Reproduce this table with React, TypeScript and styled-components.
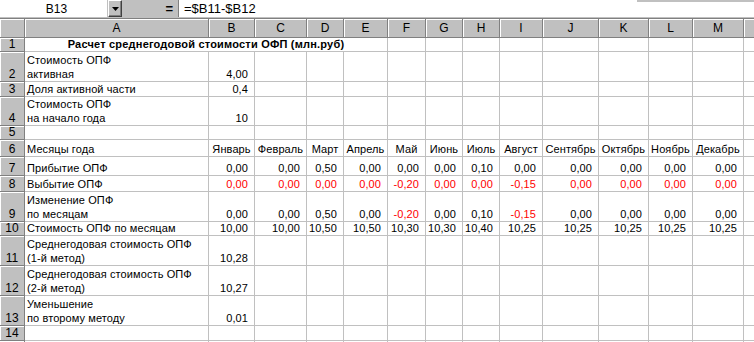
import React from "react";
import styled, { createGlobalStyle } from "styled-components";

const GlobalStyle = createGlobalStyle`
  html, body { margin: 0; padding: 0; background: #ffffff; }
  body { font-family: "Liberation Sans", Arial, sans-serif; overflow: hidden; }
`;

const Window = styled.div`
  width: 754px;
  height: 342px;
  overflow: hidden;
  background: #ffffff;
  display: flex;
  flex-direction: column;
`;

const FormulaBar = styled.div`
  box-sizing: border-box;
  display: flex;
  align-items: flex-start;
  height: 19px;
  background: #c0c0c0;
  border-bottom: 1px solid #808080;
  flex-shrink: 0;
`;

const NameBox = styled.div`
  width: 107px;
  height: 17px;
  background: #ffffff;
  display: flex;
  align-items: center;
  justify-content: center;
  padding-left: 6px;
  box-sizing: border-box;
  font-size: 12px;
  color: #000;
`;

const DropButton = styled.div`
  box-sizing: border-box;
  margin-left: 1px;
  width: 14px;
  height: 17px;
  background: #c0c0c0;
  border-top: 1px solid #ffffff;
  border-left: 1px solid #ffffff;
  border-right: 1px solid #404040;
  border-bottom: 1px solid #404040;
  box-shadow: inset -1px -1px 0 #808080;
  display: flex;
  align-items: center;
  justify-content: center;
`;

const EqualsArea = styled.div`
  width: 56px;
  height: 17px;
  display: flex;
  align-items: center;
  justify-content: flex-end;
  padding-right: 5px;
  box-sizing: border-box;
  font-size: 13px;
  font-weight: bold;
`;

const FormulaInput = styled.div`
  flex: 1;
  box-sizing: border-box;
  height: 17px;
  border-left: 1px solid #808080;
  background: linear-gradient(to left, #c0c0c0 117px, #ffffff 117px) top / 100% 2px no-repeat, #ffffff;
  padding-left: 5px;
  display: flex;
  align-items: center;
  font-size: 13px;
  color: #000;
`;

const Sheet = styled.div`
  display: grid;
  grid-template-columns: 25px 184px 46px 52px 37px 44px 38px 37px 37px 43px 56px 50px 44px 51px 80px;
  grid-template-rows: 19px 14px 30px 15px 29px 14px 17px 19px 16px 30px 14px 30px 30px 30px 15px 20px;
  flex: 1;
  overflow: hidden;
`;

const HeaderBase = styled.div`
  box-sizing: border-box;
  background: #c0c0c0;
  border-right: 1px solid #808080;
  border-bottom: 1px solid #808080;
  box-shadow: inset 1px 1px 0 #ffffff;
  font-size: 12px;
  color: #000;
  display: flex;
  justify-content: center;
`;

const Corner = styled(HeaderBase)``;

const ColHeader = styled(HeaderBase)`
  align-items: center;
`;

const RowHeader = styled(HeaderBase)`
  align-items: flex-end;
  line-height: 14px;
`;

type Align = "left" | "right" | "center";

const Cell = styled.div<{ $align?: Align; $red?: boolean; $bold?: boolean; $span?: number }>`
  box-sizing: border-box;
  grid-column: span ${(p) => p.$span ?? 1};
  border-right: 1px solid #c0c0c0;
  border-bottom: 1px solid #c0c0c0;
  display: flex;
  flex-direction: column;
  justify-content: flex-end;
  text-align: ${(p) => p.$align ?? "left"};
  padding: ${(p) =>
    p.$align === "right" ? "0 6px 0 0" : p.$align === "center" ? "0" : "0 0 0 2px"};
  font-size: 11px;
  line-height: 14px;
  letter-spacing: ${(p) => (p.$bold ? "0.2px" : "0.1px")};
  font-weight: ${(p) => (p.$bold ? "bold" : "normal")};
  color: ${(p) => (p.$red ? "#ff0000" : "#000000")};
  white-space: pre;
  overflow: hidden;
`;

type CellData = { t: string; align?: Align; red?: boolean; bold?: boolean; span?: number };

// The 14th column (N) is only a sliver at the window edge; its letter is off-screen.
const COLS = ["A", "B", "C", "D", "E", "F", "G", "H", "I", "J", "K", "L", "M", ""];

const months = ["Январь", "Февраль", "Март", "Апрель", "Май", "Июнь", "Июль", "Август", "Сентябрь", "Октябрь", "Ноябрь", "Декабрь"];
const arrivals = ["0,00", "0,00", "0,50", "0,00", "0,00", "0,00", "0,10", "0,00", "0,00", "0,00", "0,00", "0,00"];
const disposals = ["0,00", "0,00", "0,00", "0,00", "-0,20", "0,00", "0,00", "-0,15", "0,00", "0,00", "0,00", "0,00"];
const changes = ["0,00", "0,00", "0,50", "0,00", "-0,20", "0,00", "0,10", "-0,15", "0,00", "0,00", "0,00", "0,00"];
const values = ["10,00", "10,00", "10,50", "10,50", "10,30", "10,30", "10,40", "10,25", "10,25", "10,25", "10,25", "10,25"];

const num = (t: string, red = false): CellData => ({ t, align: "right", red });
const txt = (t: string): CellData => ({ t });

const fill = (cells: CellData[], total = 14): CellData[] => {
  const used = cells.reduce((s, c) => s + (c.span ?? 1), 0);
  return [...cells, ...Array.from({ length: Math.max(0, total - used) }, () => ({ t: "" }))];
};

const rows: CellData[][] = [
  fill([{ t: "Расчет среднегодовой стоимости ОФП (млн.руб)", align: "center", bold: true, span: 5 }]),
  fill([txt("Стоимость ОПФ\nактивная"), num("4,00")]),
  fill([txt("Доля активной части"), num("0,4")]),
  fill([txt("Стоимость ОПФ\nна начало года"), num("10")]),
  fill([]),
  fill([txt("Месяцы года"), ...months.map((m) => ({ t: m, align: "center" as Align }))]),
  fill([txt("Прибытие ОПФ"), ...arrivals.map((v) => num(v))]),
  fill([{ t: "Выбытие ОПФ" }, ...disposals.map((v) => num(v, true))]),
  fill([txt("Изменение ОПФ\nпо месяцам"), ...changes.map((v) => num(v, v.startsWith("-")))]),
  fill([txt("Стоимость ОПФ по месяцам"), ...values.map((v) => num(v))]),
  fill([txt("Среднегодовая стоимость ОПФ\n(1-й метод)"), num("10,28")]),
  fill([txt("Среднегодовая стоимость ОПФ\n(2-й метод)"), num("10,27")]),
  fill([txt("Уменьшение\nпо второму методу"), num("0,01")]),
  fill([]),
  fill([]),
];

export default function App() {
  return (
    <Window>
      <GlobalStyle />
      <FormulaBar>
        <NameBox>B13</NameBox>
        <DropButton>
          <svg width="7" height="4" viewBox="0 0 7 4">
            <polygon points="0,0 7,0 3.5,4" fill="#000" />
          </svg>
        </DropButton>
        <EqualsArea>=</EqualsArea>
        <FormulaInput>=$B11-$B12</FormulaInput>
      </FormulaBar>
      <Sheet>
        <Corner />
        {COLS.map((c, i) => (
          <ColHeader key={i}>{c}</ColHeader>
        ))}
        {rows.map((cells, ri) => (
          <React.Fragment key={ri}>
            <RowHeader>{ri < 14 ? ri + 1 : ""}</RowHeader>
            {cells.map((c, ci) => (
              <Cell key={ci} $align={c.align} $red={c.red} $bold={c.bold} $span={c.span}>
                {c.t}
              </Cell>
            ))}
          </React.Fragment>
        ))}
      </Sheet>
    </Window>
  );
}
